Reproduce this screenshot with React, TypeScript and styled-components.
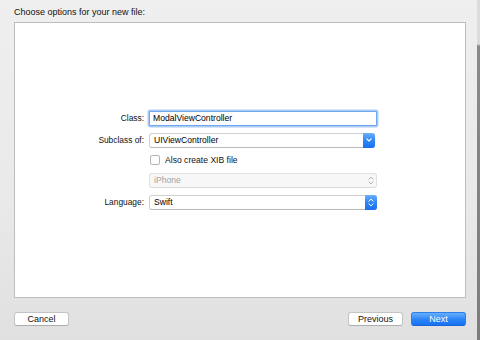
import React from 'react';
import styled, { createGlobalStyle } from 'styled-components';

const Global = createGlobalStyle`
  html, body { margin: 0; padding: 0; }
  body {
    width: 480px;
    height: 340px;
    overflow: hidden;
    font-family: "Liberation Sans", Arial, sans-serif;
  }
`;

const Screen = styled.div`
  display: flex;
  width: 480px;
  height: 340px;
`;

const Window = styled.div`
  flex: 1;
  display: flex;
  flex-direction: column;
  padding: 6px 11px 14px 14px;
  background: linear-gradient(180deg, #efefef 0%, #e9e9e9 60%, #e0e0e0 100%);
  box-sizing: border-box;
`;

const EdgeStrip = styled.div`
  width: 3px;
  background: linear-gradient(180deg, #dcdcdc 0px, #dcdcdc 44px, #8a8a8a 46px, #7c7c7c 100%);
`;

const Title = styled.div`
  font-size: 9px;
  line-height: 12px;
  color: #111;
  margin-bottom: 4px;
`;

const Panel = styled.div`
  flex: 1;
  background: #ffffff;
  border: 1px solid #bdbdbd;
  display: grid;
  align-content: center;
  justify-content: start;
  grid-template-columns: 129px 228px;
  column-gap: 5px;
  row-gap: 7px;
`;

const Label = styled.div`
  font-size: 8.4px;
  line-height: 15px;
  color: #111;
  text-align: right;
`;

const Spacer = styled.div``;

const TextField = styled.div`
  height: 15px;
  box-sizing: border-box;
  border: 1px solid #6fa6ee;
  box-shadow: 0 0 0 1.5px #a9cbf5;
  border-radius: 1px;
  background: #fff;
  font-size: 8.6px;
  line-height: 13px;
  padding-left: 3px;
  color: #000;
`;

const Popup = styled.div<{ $disabled?: boolean; $w?: number }>`
  height: 15px;
  width: ${p => p.$w ?? 228}px;
  box-sizing: border-box;
  display: flex;
  align-items: stretch;
  border: 1px solid ${p => (p.$disabled ? '#e0e0e0' : '#cfcfcf')};
  border-bottom-color: ${p => (p.$disabled ? '#dadada' : '#b9b9b9')};
  border-radius: 3px;
  background: ${p => (p.$disabled ? '#f7f7f7' : '#ffffff')};
  font-size: 8.6px;
  line-height: 13px;
  color: ${p => (p.$disabled ? '#a3a3a3' : '#000')};
`;

const PopupText = styled.div`
  flex: 1;
  padding-left: 4px;
`;

const Cap = styled.div<{ $disabled?: boolean }>`
  width: 12px;
  margin: -1px -1px -1px 0;
  border-radius: 0 3px 3px 0;
  display: flex;
  align-items: center;
  justify-content: center;
  background: ${p => (p.$disabled ? 'transparent' : 'linear-gradient(180deg, #6ab0fb 0%, #2f86f7 50%, #1a6ff0 100%)')};
`;

const CheckRow = styled.label`
  display: flex;
  align-items: center;
  gap: 5px;
  height: 11px;
  font-size: 8.6px;
  color: #111;
  padding-left: 1px;
`;

const Box = styled.span`
  width: 8px;
  height: 8px;
  border: 1px solid #b5b5b5;
  border-radius: 2px;
  background: #fff;
`;

const Footer = styled.div`
  display: flex;
  align-items: center;
  margin-top: 14px;
  gap: 8px;
`;

const Button = styled.button<{ $primary?: boolean }>`
  width: 55px;
  height: 14px;
  box-sizing: border-box;
  padding: 0;
  font-family: "Liberation Sans", Arial, sans-serif;
  font-size: 9px;
  line-height: 12px;
  border-radius: 3px;
  border: 1px solid ${p => (p.$primary ? '#2b7ef0' : '#c4c4c4')};
  border-bottom-color: ${p => (p.$primary ? '#1a63d8' : '#adadad')};
  background: ${p => (p.$primary ? 'linear-gradient(180deg, #69b0fb 0%, #2a84f7 55%, #1872f3 100%)' : '#ffffff')};
  color: ${p => (p.$primary ? '#ffffff' : '#111')};
`;

const Grow = styled.div`
  flex: 1;
`;

const DownChevron = () => (
  <svg width="6" height="4" viewBox="0 0 6 4">
    <path d="M0.8 0.8 L3 3 L5.2 0.8" fill="none" stroke="#fff" strokeWidth="1.1" strokeLinecap="round" strokeLinejoin="round" />
  </svg>
);

const UpDown = ({ color }: { color: string }) => (
  <svg width="6" height="9" viewBox="0 0 6 9">
    <path d="M0.9 3.2 L3 1.1 L5.1 3.2" fill="none" stroke={color} strokeWidth="1" strokeLinecap="round" strokeLinejoin="round" />
    <path d="M0.9 5.8 L3 7.9 L5.1 5.8" fill="none" stroke={color} strokeWidth="1" strokeLinecap="round" strokeLinejoin="round" />
  </svg>
);

export default function App() {
  return (
    <>
      <Global />
      <Screen>
        <Window>
          <Title>Choose options for your new file:</Title>
          <Panel>
            <Label>Class:</Label>
            <TextField>ModalViewController</TextField>

            <Label>Subclass of:</Label>
            <Popup $w={226}>
              <PopupText>UIViewController</PopupText>
              <Cap><DownChevron /></Cap>
            </Popup>

            <Spacer />
            <CheckRow>
              <Box />
              Also create XIB file
            </CheckRow>

            <Spacer />
            <Popup $disabled>
              <PopupText>iPhone</PopupText>
              <Cap $disabled><UpDown color="#b0b0b0" /></Cap>
            </Popup>

            <Label>Language:</Label>
            <Popup>
              <PopupText>Swift</PopupText>
              <Cap><UpDown color="#ffffff" /></Cap>
            </Popup>
          </Panel>
          <Footer>
            <Button>Cancel</Button>
            <Grow />
            <Button>Previous</Button>
            <Button $primary>Next</Button>
          </Footer>
        </Window>
        <EdgeStrip />
      </Screen>
    </>
  );
}
